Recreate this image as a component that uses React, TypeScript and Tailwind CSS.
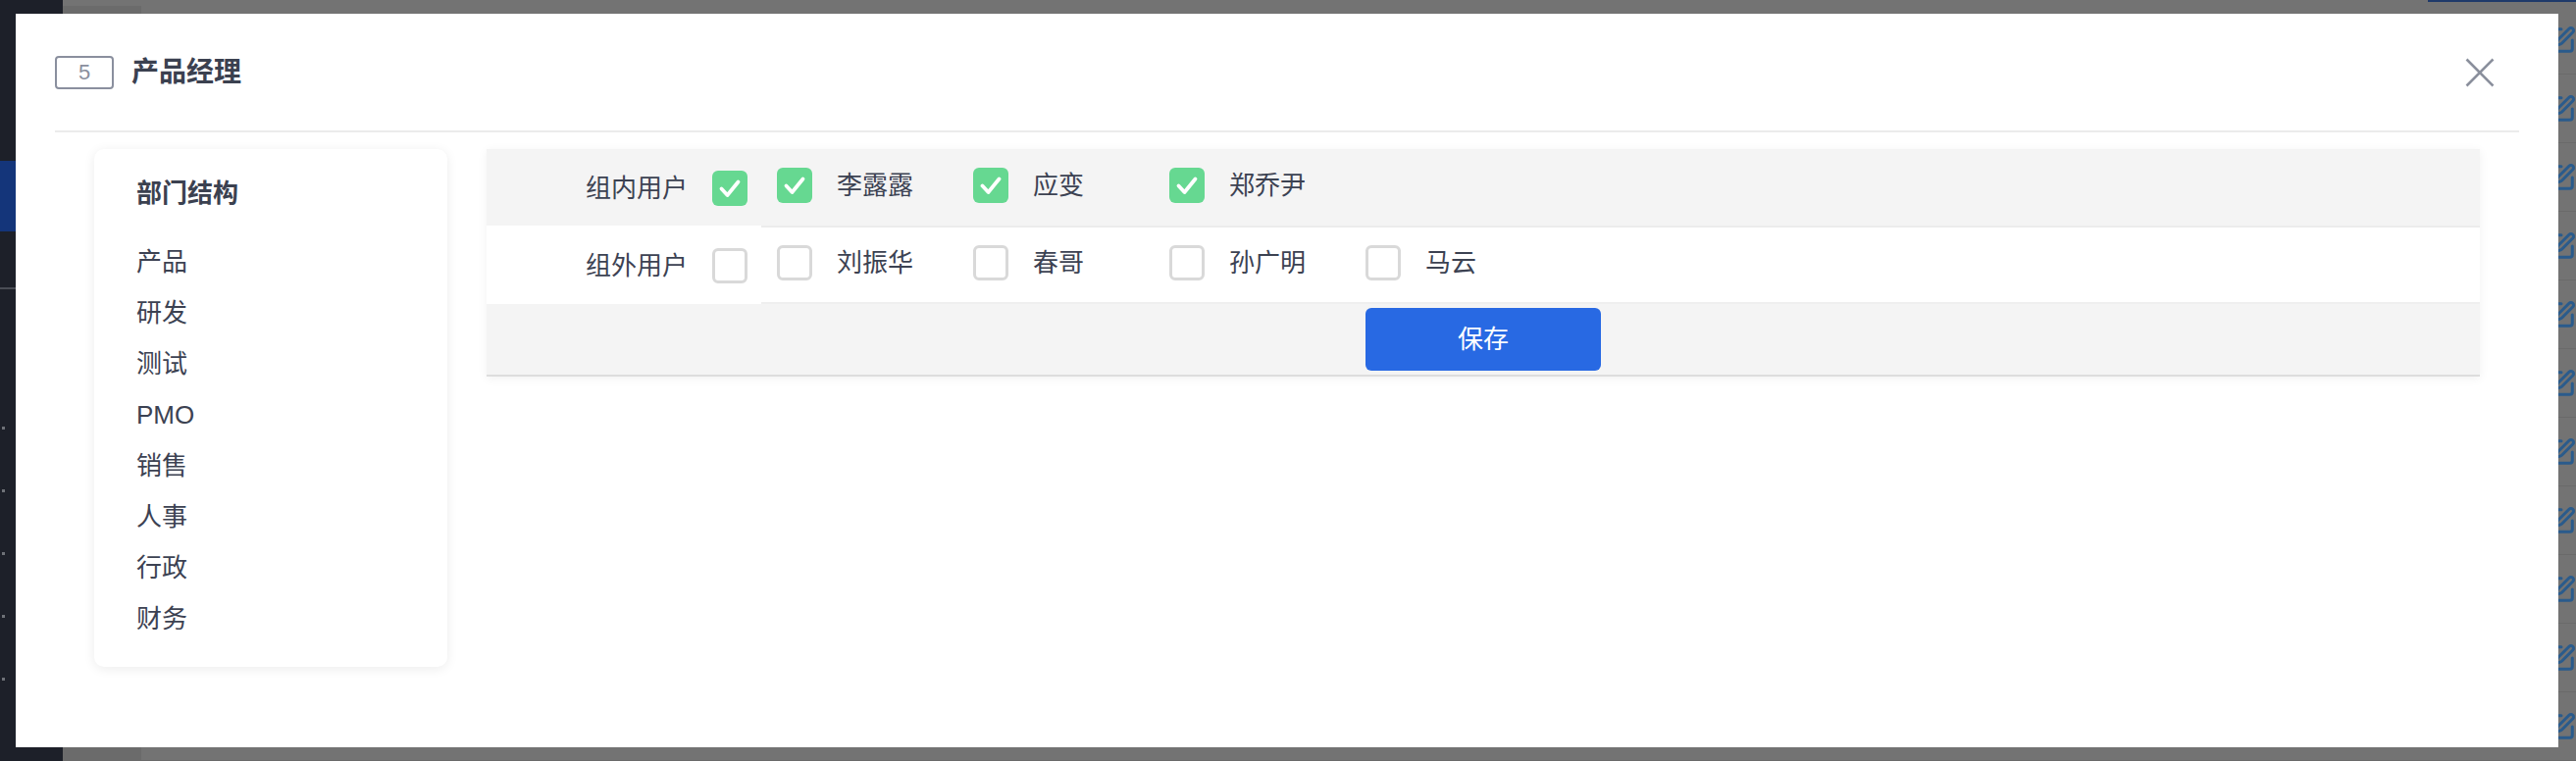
import React from 'react';
import { Circle, Lock, Columns2, FileInput, Copy, SquarePen } from 'lucide-react';

const FONT = "font-['Liberation_Sans','Noto_Sans_CJK_SC',sans-serif]";

const departments = ['产品', '研发', '测试', 'PMO', '销售', '人事', '行政', '财务'];

const groups = [
  {
    label: '组内用户',
    checked: true,
    bg: 'bg-[#f4f4f4]',
    users: [
      { name: '李露露', checked: true },
      { name: '应变', checked: true },
      { name: '郑乔尹', checked: true }
    ]
  },
  {
    label: '组外用户',
    checked: false,
    bg: 'bg-white',
    users: [
      { name: '刘振华', checked: false },
      { name: '春哥', checked: false },
      { name: '孙广明', checked: false },
      { name: '马云', checked: false }
    ]
  }
];

const CheckBox: React.FC<{ checked: boolean }> = ({ checked }) =>
  checked ? (
    <span className="flex h-[36px] w-[36px] shrink-0 items-center justify-center rounded-[6px] bg-[#66d891]">
      <svg width="36" height="36" viewBox="0 0 36 36" fill="none">
        <path d="M9.5 18.5 L15.5 25 L26.5 11.5" stroke="white" strokeWidth="3.8" strokeLinecap="round" strokeLinejoin="round" />
      </svg>
    </span>
  ) : (
    <span className="block h-[36px] w-[36px] shrink-0 rounded-[6px] border-[3px] border-[#d9d9d9] bg-white" />
  );

const RowIcons: React.FC = () => (
  <div className="ml-auto flex items-center gap-[22px] text-[#2a5b8c]">
    <Circle size={28} strokeWidth={2.4} />
    <Lock size={28} strokeWidth={2.4} />
    <Columns2 size={30} strokeWidth={2.4} />
    <FileInput size={30} strokeWidth={2.4} />
    <Copy size={30} strokeWidth={2.4} />
    <SquarePen size={30} strokeWidth={2.4} />
  </div>
);

const Backdrop: React.FC = () => (
  <div className="flex h-full w-full">
    <div className="flex w-[64px] shrink-0 flex-col bg-[#1d2029]">
      <div className="h-[164px]" />
      <div className="h-[72px] bg-[#14357a]" />
      <div className="h-[57px]" />
      <div className="h-[2px] bg-[#4a4d55]" />
      <div className="flex flex-col gap-[61px] pl-[2px] pt-[140px]">
        {[0, 1, 2, 3, 4].map((i) => (
          <span key={i} className="block h-[3px] w-[3px] bg-[#6f7278]" />
        ))}
      </div>
    </div>
    <div className="flex flex-1 flex-col bg-[#737373]">
      <div className="flex h-[22px] justify-end">
        <span className="block h-[2px] w-[151px] bg-[#1f3a6a]" />
      </div>
      {Array.from({ length: 11 }).map((_, i) => (
        <div key={i} className={`flex h-[70px] shrink-0 items-center border-b border-[#6a6a6a] text-[26px] text-[#1e1e1e] ${FONT}`}>
          <div className="h-full w-[80px] bg-[#6b6b6b]" />
          {i === 10 ? (
            <>
              <span className="ml-[66px] w-[90px]">10</span>
              <span className="w-[260px]">其他</span>
              <span>其他</span>
            </>
          ) : null}
          <RowIcons />
        </div>
      ))}
    </div>
  </div>
);

const Modal: React.FC = () => (
  <div className={`absolute left-[16px] top-[14px] flex h-[748px] w-[2592px] flex-col bg-white ${FONT}`}>
    <div className="mx-[40px] flex h-[121px] shrink-0 items-center border-b-2 border-[#ebebeb]">
      <span className="flex h-[34px] w-[60px] items-center justify-center rounded-[4px] border-2 border-[#8a8f9e] text-[22px] leading-none text-[#8a8f9e]">
        5
      </span>
      <span className="ml-[18px] text-[28px] font-bold leading-none text-[#3b4150]">产品经理</span>
      <button className="ml-auto mr-[25px] flex h-[30px] w-[30px] items-center justify-center">
        <svg width="30" height="30" viewBox="0 0 30 30" fill="none">
          <path d="M1.5 1.5 L28.5 28.5 M28.5 1.5 L1.5 28.5" stroke="#8a8f9c" strokeWidth="2.6" />
        </svg>
      </button>
    </div>

    <div className="flex items-start gap-[40px] px-[80px] pt-[17px]">
      <div className="h-[528px] w-[360px] shrink-0 rounded-[10px] bg-white pl-[43px] pt-[27px] shadow-[0_2px_12px_rgba(0,0,0,0.08)]">
        <h3 className="text-[26px] font-bold leading-[36px] text-[#3b4150]">部门结构</h3>
        <ul className="mt-[26px] flex flex-col">
          {departments.map((d) => (
            <li key={d} className="text-[26px] leading-[52px] text-[#3c4252]">
              {d}
            </li>
          ))}
        </ul>
      </div>

      <div className="flex flex-1 flex-col border-b-2 border-[#dddddd] shadow-[0_2px_10px_rgba(0,0,0,0.06)]">
        {groups.map((g, gi) => (
          <div key={g.label} className={`flex ${gi === 0 ? 'h-[78px]' : 'h-[80px]'} ${g.bg}`}>
            <div className="flex w-[280px] shrink-0 items-center justify-end gap-[25px] pr-[14px] pt-[2px]">
              <span className="text-[26px] leading-none text-[#3c4252]">{g.label}</span>
              <CheckBox checked={g.checked} />
            </div>
            <div
              className={`flex flex-1 items-center pb-[5px] pl-[16px] ${
                gi === 1 ? 'border-y-2 border-t-[#ececec] border-b-[#efefef]' : ''
              }`}
            >
              {g.users.map((u) => (
                <label key={u.name} className="flex w-[200px] items-center gap-[25px]">
                  <CheckBox checked={u.checked} />
                  <span className="text-[26px] leading-none text-[#3c4252]">{u.name}</span>
                </label>
              ))}
            </div>
          </div>
        ))}
        <div className="flex h-[72px] items-center justify-center bg-[#f4f4f4]">
          <button className="h-[64px] w-[240px] rounded-[6px] bg-[#2869e3] text-[26px] text-white">保存</button>
        </div>
      </div>
    </div>
  </div>
);

export default function App() {
  return (
    <div className="relative h-[776px] w-[2626px] overflow-hidden">
      <Backdrop />
      <Modal />
    </div>
  );
}
